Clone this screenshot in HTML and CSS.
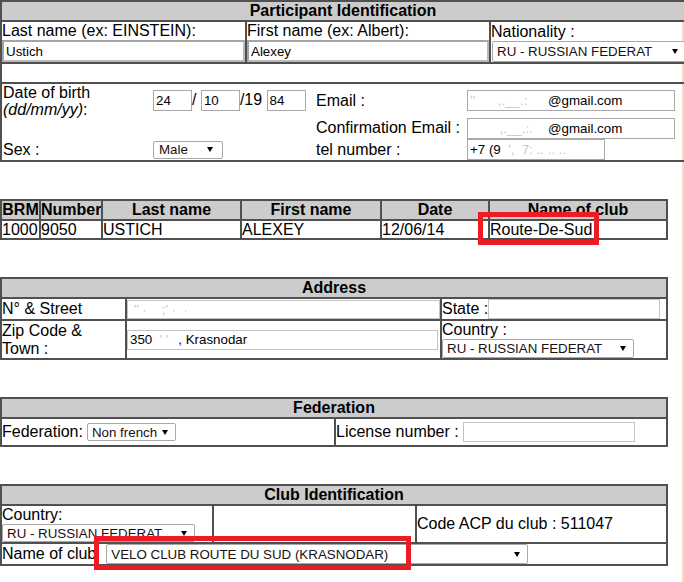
FILE: index.html
```html
<!DOCTYPE html>
<html>
  <head>
    <meta charset="utf-8">
    <meta name="viewport" content="width=device-width,initial-scale=1">
    <link rel="stylesheet" href="styles.css">
    <title>Registration form</title>
  </head>
  <body>
    <div class="page">

      <table class="form-table table-participant">
        <colgroup><col class="c245"><col class="c244"><col class="c195"></colgroup>
        <tr><th colspan="3">Participant Identification</th></tr>
        <tr class="row-names">
          <td>Last name (ex: EINSTEIN):<input class="field field-block" type="text" value="Ustich"></td>
          <td>First name (ex: Albert):<input class="field field-block" type="text" value="Alexey"></td>
          <td>Nationality :<span class="select select-nat">RU - RUSSIAN FEDERAT</span></td>
        </tr>
        <tr class="row-spacer"><td colspan="3"></td></tr>
        <tr class="row-details">
          <td colspan="3">
            <div class="details-grid">
              <div class="dob-label">Date of birth<br><i>(dd/mm/yy)</i>:</div>
              <div class="dob"><input class="field field-date" type="text" value="24">/ <input class="field field-date" type="text" value="10">/19 <input class="field field-date" type="text" value="84"></div>
              <div>Email :</div>
              <div><span class="field field-email"><span class="redact redact-email">ʻ'&nbsp;&nbsp;&nbsp;&nbsp;&nbsp;&nbsp;,.__.:</span>@gmail.com</span></div>

              <div></div>
              <div></div>
              <div>Confirmation Email :</div>
              <div><span class="field field-email"><span class="redact redact-email">&nbsp;&nbsp;&nbsp;&nbsp;&nbsp;&nbsp;&nbsp;&nbsp;,.__.:.</span>@gmail.com</span></div>

              <div>Sex :</div>
              <div><span class="select select-sex">Male</span></div>
              <div>tel number :</div>
              <div><span class="field field-tel">+7 (9<span class="redact">&nbsp;&nbsp;',&nbsp;&nbsp;7:&nbsp;.. ..&nbsp;..</span></span></div>
            </div>
          </td>
        </tr>
      </table>

      <table class="form-table table-brm">
        <colgroup><col class="c39"><col class="c62"><col class="c139"><col class="c140"><col class="c108"><col class="c178"></colgroup>
        <tr>
          <th>BRM</th>
          <th>Number</th>
          <th>Last name</th>
          <th>First name</th>
          <th>Date</th>
          <th>Name of club</th>
        </tr>
        <tr class="row-data">
          <td>1000</td>
          <td>9050</td>
          <td>USTICH</td>
          <td>ALEXEY</td>
          <td>12/06/14</td>
          <td>Route-De-Sud</td>
        </tr>
      </table>

      <table class="form-table table-address">
        <colgroup><col class="c125"><col class="c315"><col class="c226"></colgroup>
        <tr><th colspan="3">Address</th></tr>
        <tr class="row-street">
          <td>N° &amp; Street</td>
          <td><span class="field field-fill"><span class="redact">&nbsp;''&nbsp;·&nbsp;&nbsp;&nbsp;&nbsp;;'&nbsp;·&nbsp;&nbsp;·</span></span></td>
          <td><div class="inline-row">State :<input class="field field-state" type="text" value=""></div></td>
        </tr>
        <tr class="row-zip">
          <td>Zip Code &amp;<br>Town :</td>
          <td><span class="field field-fill field-zip">350<span class="redact redact-zip">&nbsp;&nbsp;'&nbsp;'</span>, Krasnodar</span></td>
          <td>Country :<span class="select select-country">RU - RUSSIAN FEDERAT</span></td>
        </tr>
      </table>

      <table class="form-table table-federation">
        <colgroup><col class="c334"><col class="c332"></colgroup>
        <tr><th colspan="2">Federation</th></tr>
        <tr class="row-federation">
          <td><div class="inline-row gap">Federation:<span class="select select-fed">Non french</span></div></td>
          <td><div class="inline-row gap">License number :<input class="field field-license" type="text" value=""></div></td>
        </tr>
      </table>

      <table class="form-table table-club">
        <colgroup><col class="c212"><col class="c203"><col class="c251"></colgroup>
        <tr><th colspan="3">Club Identification</th></tr>
        <tr class="row-club">
          <td>Country:<span class="select select-club-country">RU - RUSSIAN FEDERAT</span></td>
          <td></td>
          <td>Code ACP du club : 511047</td>
        </tr>
        <tr class="row-club-name">
          <td colspan="3"><div class="inline-row">Name of club<span class="select select-club-name">VELO CLUB ROUTE DU SUD (KRASNODAR)</span></div></td>
        </tr>
      </table>

      <div class="mark mark-club"></div>
      <div class="mark mark-club-name"></div>
    </div>
  </body>
</html>
```

FILE: styles.css
```css
* {
  box-sizing: border-box;
}
html {
  overflow: hidden;
}
body {
  margin: 0;
  font-family: "Liberation Sans", Arial, sans-serif;
  font-size: 16px;
  color: #000;
  background-color: #fff;
}
.page {
  position: relative;
  width: 684px;
  height: 582px;
  border-right: 2px solid #efdcc3;
}

/* tables */
.form-table {
  width: 668px;
  border: 1px solid #505050;
  border-spacing: 0;
  table-layout: fixed;
  margin-top: 37px;
}
.table-participant {
  width: 686px;
  margin-top: 0;
}
.form-table th,
.form-table td {
  border: 1px solid #505050;
  padding: 0;
  font-size: 16px;
  line-height: 18px;
  text-align: left;
  white-space: nowrap;
  overflow: hidden;
}
.form-table th {
  height: 20px;
  background-color: #cccccc;
  font-weight: 700;
  text-align: center;
}
.c39 { width: 39px; }
.c62 { width: 62px; }
.c108 { width: 108px; }
.c125 { width: 125px; }
.c139 { width: 139px; }
.c140 { width: 140px; }
.c178 { width: 178px; }
.c195 { width: 195px; }
.c203 { width: 203px; }
.c212 { width: 212px; }
.c226 { width: 226px; }
.c244 { width: 244px; }
.c245 { width: 245px; }
.c251 { width: 251px; }
.c315 { width: 315px; }
.c332 { width: 332px; }
.c334 { width: 334px; }

.row-names td { height: 42px; }
.row-spacer td { height: 20px; }
.row-details td { height: 78px; }
.row-data td { height: 19px; line-height: 17px; }
.row-street td { height: 21px; }
.row-zip td { height: 39px; }
.row-federation td { height: 28px; }
.row-club td { height: 38px; }
.row-club-name td { height: 22px; }

.inline-row {
  display: flex;
  align-items: center;
}
.inline-row.gap {
  gap: 4px;
}

/* inputs */
.field {
  display: inline-block;
  height: 21px;
  padding: 0 2px;
  border: 1px solid #a9a9a9;
  background-color: #fff;
  font-family: "Liberation Sans", Arial, sans-serif;
  font-size: 13.33px;
  line-height: 19px;
  color: #000;
  vertical-align: middle;
  white-space: pre;
  overflow: hidden;
}
.field-block {
  display: block;
  width: 100%;
  height: 22px;
  border: 2px solid #b9b9b9;
  border-top-color: #a4a4a4;
  border-left-color: #a4a4a4;
}
.field-date { width: 39px; }
.field-email { width: 208px; }
.field-tel { width: 138px; }
.field-fill {
  display: block;
  width: 100%;
  height: 19px;
  line-height: 17px;
  border-color: #c4c4c4;
}
.field-zip {
  height: 20px;
  line-height: 18px;
  width: 311px;
}
.field-state {
  width: 172px;
  height: 20px;
  border-color: #c4c4c4;
}
.field-license {
  width: 172px;
  height: 20px;
  border-color: #c4c4c4;
}
.redact {
  color: #c8c8c8;
}
.redact-email {
  display: inline-block;
  width: 78px;
}
.redact-zip {
  display: inline-block;
  width: 26px;
}

/* drop-down boxes */
.select {
  display: flex;
  align-items: center;
  justify-content: space-between;
  height: 19px;
  padding: 0 7px 0 4px;
  border: 1px solid #a9a9a9;
  border-radius: 2px;
  background-color: #fff;
  font-size: 13.33px;
  line-height: 17px;
  color: #1a1010;
}
.select::after {
  content: "";
  border-left: 3px solid transparent;
  border-right: 3px solid transparent;
  border-top: 5px solid #000;
}
.select-nat {
  width: 194px;
  height: 21px;
  margin-left: 1px;
  margin-top: 0;
}
.select-sex {
  width: 70px;
  height: 18px;
  padding-left: 5px;
  padding-right: 9px;
}
.select-country {
  width: 192px;
}
.select-fed {
  width: 89px;
  height: 18px;
}
.select-club-country {
  width: 193px;
  height: 18px;
}
.select-club-name {
  width: 422px;
  height: 20px;
  margin-left: 10px;
}

/* participant details block */
.details-grid {
  display: grid;
  grid-template-columns: 150px 163px 151px auto;
  grid-template-rows: 33px 22px 21px;
  align-items: center;
  padding-left: 1px;
}
.dob-label {
  align-self: start;
  line-height: 17px;
}
.dob {
  white-space: nowrap;
}

/* red highlights drawn over the form */
.mark {
  position: absolute;
  border: 5px solid #ed1c24;
}
.mark-club {
  left: 478px;
  top: 212px;
  width: 121px;
  height: 33px;
}
.mark-club-name {
  left: 94px;
  top: 536px;
  width: 317px;
  height: 34px;
}
```
